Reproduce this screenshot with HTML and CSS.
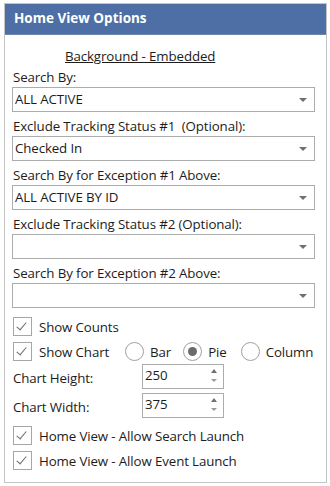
FILE: index.html
```html
<!DOCTYPE html>
<html lang="en">
<head>
    <meta charset="UTF-8">
    <title>Home View Options</title>
    <link rel="stylesheet" href="styles.css">
</head>
<body>
    <div class="panel">
        <div class="panel-header">Home View Options</div>
        <div class="panel-body">
            <div class="subtitle"><span>Background - Embedded</span></div>

            <div class="field-label">Search By:</div>
            <div class="select">ALL ACTIVE<span class="arrow"></span></div>

            <div class="field-label">Exclude Tracking Status #1&nbsp; (Optional):</div>
            <div class="select">Checked In<span class="arrow"></span></div>

            <div class="field-label">Search By for Exception #1 Above:</div>
            <div class="select">ALL ACTIVE BY ID<span class="arrow"></span></div>

            <div class="field-label">Exclude Tracking Status #2 (Optional):</div>
            <div class="select"><span class="arrow"></span></div>

            <div class="field-label">Search By for Exception #2 Above:</div>
            <div class="select"><span class="arrow"></span></div>

            <div class="check-row first">
                <span class="checkbox checked"></span>
                <span>Show Counts</span>
            </div>
            <div class="check-row">
                <span class="checkbox checked"></span>
                <span class="chart-label">Show Chart</span>
                <span class="radio"></span><span class="radio-label short">Bar</span>
                <span class="radio selected"></span><span class="radio-label">Pie</span>
                <span class="radio"></span><span class="radio-label">Column</span>
            </div>
            <div class="spin-row">
                <span class="spin-label">Chart Height:</span>
                <div class="spin">250<span class="spin-arrows"><i class="up"></i><i class="down"></i></span></div>
            </div>
            <div class="spin-row">
                <span class="spin-label">Chart Width:</span>
                <div class="spin">375<span class="spin-arrows"><i class="up"></i><i class="down"></i></span></div>
            </div>
            <div class="check-row launch">
                <span class="checkbox checked"></span>
                <span>Home View - Allow Search Launch</span>
            </div>
            <div class="check-row">
                <span class="checkbox checked"></span>
                <span>Home View - Allow Event Launch</span>
            </div>
        </div>
    </div>
</body>
</html>
```

FILE: styles.css
```css
body {
    margin: 0;
    background: #ffffff;
    font-family: "Open Sans", "Noto Sans", Arial, sans-serif;
    font-size: 13.3px;
    letter-spacing: -0.12px;
    color: #1c1c1c;
}
.panel {
    margin: 3px 0 0 4px;
    width: 323px;
    height: 480px;
    box-sizing: border-box;
    border: 1px solid #c4c4c4;
}
.panel-header {
    height: 30px;
    line-height: 29px;
    background: #4e6fa5;
    border-bottom: 1px solid #6e85ad;
    color: #fff;
    font-weight: bold;
    font-size: 13.5px;
    letter-spacing: 0;
    padding-left: 9px;
}
.panel-body {
    padding: 0 11px 0 7px;
}
.subtitle {
    height: 20px;
    line-height: 20px;
    margin-top: 11px;
    padding-left: 53px;
}
.subtitle span {
    text-decoration: underline;
}
.field-label {
    height: 20px;
    line-height: 20px;
    margin-top: 1px;
    padding-left: 1px;
}
.select + .field-label {
    margin-top: 4px;
}
.select {
    position: relative;
    height: 25px;
    line-height: 23px;
    box-sizing: border-box;
    border: 1px solid #acacac;
    padding-left: 2px;
}
.arrow {
    position: absolute;
    right: 7px;
    top: 10px;
    border-left: 4px solid transparent;
    border-right: 4px solid transparent;
    border-top: 4px solid #6f6f6f;
}
.check-row {
    display: flex;
    align-items: center;
    height: 25px;
    gap: 7px;
    padding-left: 1px;
    white-space: nowrap;
}
.check-row.first {
    margin-top: 6px;
}
.check-row.launch {
    margin-top: 5px;
}
.checkbox {
    position: relative;
    width: 19px;
    height: 19px;
    box-sizing: border-box;
    border: 1px solid #a6a6a6;
    flex-shrink: 0;
}
.checkbox.checked::after {
    content: "";
    position: absolute;
    left: 5px;
    top: 2px;
    width: 4px;
    height: 9px;
    border-right: 1.5px solid #6a6a6a;
    border-bottom: 1.5px solid #6a6a6a;
    transform: rotate(40deg);
}
.chart-label {
    margin-right: 9px;
}
.radio {
    position: relative;
    width: 19px;
    height: 19px;
    box-sizing: border-box;
    border: 1px solid #a0a0a0;
    border-radius: 50%;
    flex-shrink: 0;
    margin-right: -1px;
}
.radio.selected::after {
    content: "";
    position: absolute;
    left: 4px;
    top: 4px;
    width: 9px;
    height: 9px;
    border-radius: 50%;
    background: #6b6b6b;
}
.radio-label {
    margin-right: 7px;
}
.radio-label.short {
    margin-right: 5px;
}
.spin-row {
    display: flex;
    align-items: center;
    height: 25px;
    padding-left: 1px;
}
.spin-row + .spin-row {
    margin-top: 4px;
}
.spin-label {
    width: 129px;
    padding-top: 3px;
}
.spin {
    position: relative;
    width: 82px;
    height: 25px;
    line-height: 21px;
    box-sizing: border-box;
    border: 1px solid #acacac;
    padding-left: 2px;
}
.spin-arrows {
    position: absolute;
    right: 6px;
    top: 4px;
    display: flex;
    flex-direction: column;
    gap: 6px;
}
.spin-arrows i {
    display: block;
    border-left: 3px solid transparent;
    border-right: 3px solid transparent;
}
.spin-arrows .up {
    border-bottom: 4px solid #6f6f6f;
}
.spin-arrows .down {
    border-top: 3px solid #9a9a9a;
}
```
